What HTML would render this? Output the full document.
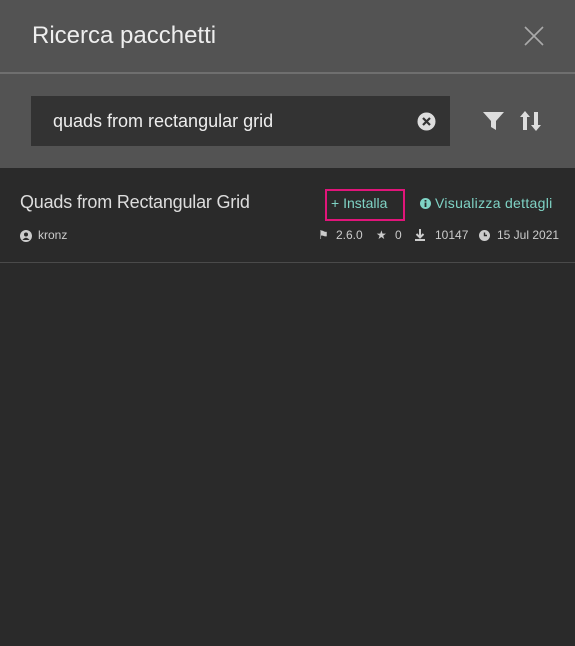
<!DOCTYPE html>
<html><head><style>
body{margin:0;width:575px;height:646px;background:#2a2a2a;font-family:"Liberation Sans",sans-serif;overflow:hidden;position:relative}
.hdr{position:absolute;left:0;top:0;width:575px;height:72px;background:#535353;border-bottom:2px solid #6f6f6f}
.hdr h1{position:absolute;left:32px;top:22px;margin:0;font-weight:normal;font-size:24px;color:#eee}
.sr{position:absolute;left:0;top:74px;width:575px;height:94px;background:#535353}
.box{position:absolute;left:31px;top:22px;width:419px;height:50px;background:#333}
.box span{position:absolute;left:22px;top:15px;font-size:18px;color:#eee}
.t{position:absolute;color:#ddd;white-space:nowrap}
.g{color:#7fd3c5}
.s{position:absolute;top:228px;font-size:12px;color:#ccc;white-space:nowrap}
</style></head><body>
<div class="hdr"><h1>Ricerca pacchetti</h1>
<svg style="position:absolute;left:524px;top:26px" width="20" height="20"><path d="M1 1L19 19M19 1L1 19" stroke="#aaa" stroke-width="1.6"/></svg></div>
<div class="sr"><div class="box"><span>quads from rectangular grid</span>
<svg style="position:absolute;left:386px;top:16px" width="19" height="19"><circle cx="9.5" cy="9.5" r="9" fill="#ddd"/><path d="M6 6L13 13M13 6L6 13" stroke="#333" stroke-width="2.2"/></svg></div>
<svg style="position:absolute;left:483px;top:38px" width="21" height="18"><path d="M0 0H21L13 9V18L8 15V9Z" fill="#ddd"/></svg>
<svg style="position:absolute;left:520px;top:37px" width="22" height="20"><path d="M5 0L10 6H7V19H3V6H0Z M16 20L21 14H18V1H14V14H11Z" fill="#ddd"/></svg></div>
<div class="t" style="left:20px;top:192px;font-size:18px;letter-spacing:-0.2px">Quads from Rectangular Grid</div>
<div style="position:absolute;left:325px;top:189px;width:76px;height:28px;border:2px solid #e0157a"></div>
<div class="t g" style="left:331px;top:195px;font-size:14px">+ Installa</div>
<svg style="position:absolute;left:420px;top:198px" width="11" height="11"><circle cx="5.5" cy="5.5" r="5.5" fill="#7fd3c5"/><rect x="4.6" y="4.5" width="1.8" height="4.5" fill="#2a2a2a"/><rect x="4.6" y="2" width="1.8" height="1.6" fill="#2a2a2a"/></svg>
<div class="t g" style="left:435px;top:195px;font-size:14px;letter-spacing:0.3px">Visualizza dettagli</div>
<svg style="position:absolute;left:20px;top:230px" width="12" height="12"><circle cx="6" cy="6" r="6" fill="#ccc"/><circle cx="6" cy="4.5" r="2" fill="#2a2a2a"/><path d="M2.5 10Q6 5.5 9.5 10Z" fill="#2a2a2a"/></svg>
<div class="s" style="left:38px">kronz</div>
<div class="s" style="left:318px">⚑</div>
<div class="s" style="left:336px">2.6.0</div>
<div class="s" style="left:376px">★</div>
<div class="s" style="left:395px">0</div>
<svg style="position:absolute;left:414px;top:229px" width="12" height="12"><path d="M6 0V8M2.5 5L6 8.5L9.5 5M1 11H11" stroke="#ccc" stroke-width="2" fill="none"/></svg>
<div class="s" style="left:435px">10147</div>
<svg style="position:absolute;left:479px;top:230px" width="11" height="11"><circle cx="5.5" cy="5.5" r="5.5" fill="#ccc"/><path d="M5.5 2.5V5.5H8" stroke="#2a2a2a" stroke-width="1.4" fill="none"/></svg>
<div class="s" style="left:497px">15 Jul 2021</div>
<div style="position:absolute;left:0;top:262px;width:575px;height:1px;background:#4a4a4a"></div>
</body></html>
